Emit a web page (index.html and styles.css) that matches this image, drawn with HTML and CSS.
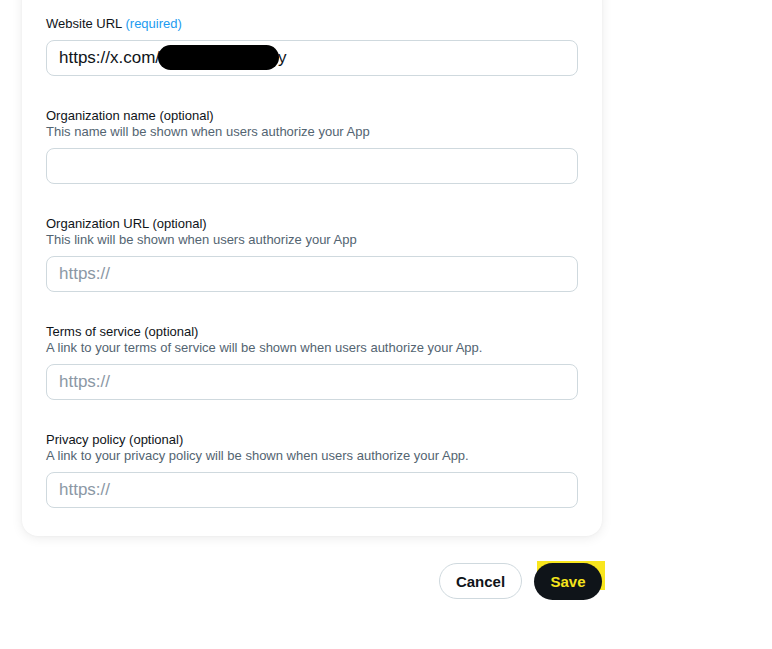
FILE: index.html
```html
<!DOCTYPE html>
<html lang="en">
<head>
  <meta charset="UTF-8">
  <meta name="viewport" content="width=device-width, initial-scale=1.0">
  <title>App details</title>
  <link rel="stylesheet" href="styles.css">
</head>
<body>
  <div class="page">
    <div class="card">
      <div class="field">
        <div class="label">Website URL <span class="required">(required)</span></div>
        <div class="input">https://x.com/<span class="redact"></span>y</div>
      </div>

      <div class="field">
        <div class="label">Organization name <span class="optional">(optional)</span></div>
        <div class="desc">This name will be shown when users authorize your App</div>
        <div class="input"></div>
      </div>

      <div class="field">
        <div class="label">Organization URL <span class="optional">(optional)</span></div>
        <div class="desc">This link will be shown when users authorize your App</div>
        <div class="input placeholder">https://</div>
      </div>

      <div class="field">
        <div class="label">Terms of service <span class="optional">(optional)</span></div>
        <div class="desc">A link to your terms of service will be shown when users authorize your App.</div>
        <div class="input placeholder">https://</div>
      </div>

      <div class="field">
        <div class="label">Privacy policy <span class="optional">(optional)</span></div>
        <div class="desc">A link to your privacy policy will be shown when users authorize your App.</div>
        <div class="input placeholder">https://</div>
      </div>
    </div>

    <div class="actions">
      <button class="btn btn-cancel">Cancel</button>
      <button class="btn btn-save">Save</button>
    </div>
  </div>
</body>
</html>
```

FILE: styles.css
```css
body {
  margin: 0;
  background: #ffffff;
  color: #0f1419;
  font-family: "Liberation Sans", Arial, sans-serif;
}
.page {
  width: 580px;
  padding-left: 22px;
}
.card {
  margin-top: -20px;
  padding: 36px 24px 28px;
  background: #ffffff;
  border-radius: 16px;
  box-shadow: 0 2px 12px rgba(0, 0, 0, 0.08), 0 0 3px rgba(0, 0, 0, 0.04);
}
.field {
  margin-bottom: 32px;
}
.field:last-child {
  margin-bottom: 0;
}
.label {
  font-size: 13px;
  line-height: 16px;
  color: #0f1419;
}
.required {
  color: #1d9bf0;
}
.optional {
  color: #0f1419;
}
.desc {
  font-size: 13px;
  line-height: 16px;
  color: #536471;
}
.input {
  margin-top: 8px;
  height: 34px;
  border: 1px solid #cfd9de;
  border-radius: 8px;
  padding: 0 12px;
  font-size: 17px;
  line-height: 34px;
  color: #0f1419;
  white-space: nowrap;
}
.placeholder {
  color: #8b98a5;
}
.redact {
  display: inline-block;
  width: 121px;
  height: 25px;
  margin-left: -2px;
  margin-right: -1px;
  background: #000000;
  border-radius: 13px;
  vertical-align: middle;
  position: relative;
  top: -1px;
}
.actions {
  display: flex;
  justify-content: flex-end;
  gap: 12px;
  margin-top: 27px;
}
.btn {
  font-family: "Liberation Sans", Arial, sans-serif;
  font-size: 15px;
  font-weight: bold;
  border-radius: 999px;
  cursor: pointer;
}
.btn-cancel {
  width: 83px;
  height: 36px;
  background: #ffffff;
  border: 1px solid #cfd9de;
  color: #0f1419;
}
.btn-save {
  position: relative;
  width: 68px;
  height: 37px;
  background: #0f1419;
  border: none;
  color: #f5e41c;
}
.btn-save::before {
  content: "";
  position: absolute;
  left: 3px;
  top: -2px;
  width: 68px;
  height: 29px;
  background: #f9e61e;
  z-index: -1;
}
```
